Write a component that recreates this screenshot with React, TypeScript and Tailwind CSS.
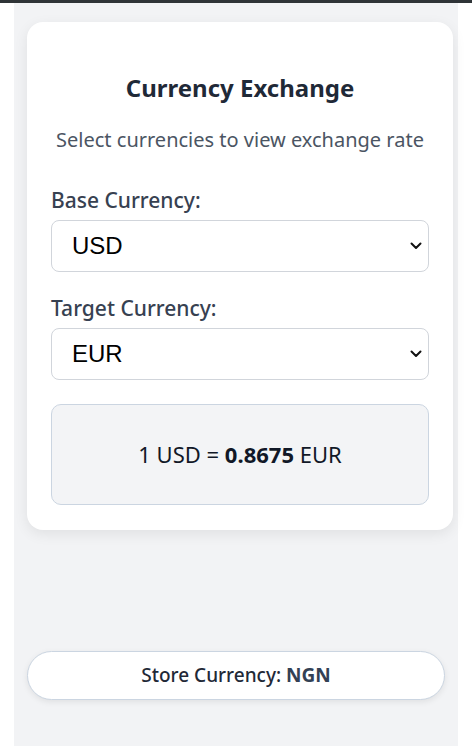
import React, { useState } from 'react';

const currencies = ['USD', 'EUR', 'GBP', 'NGN', 'JPY'];

const Chevron = () => (
    <svg className="pointer-events-none absolute right-[7px] top-1/2 -translate-y-1/2" width="12" height="8" viewBox="0 0 12 8" fill="none">
        <path d="M1.5 1.5 6 6l4.5-4.5" stroke="#111" strokeWidth="2" strokeLinecap="round" strokeLinejoin="round" />
    </svg>
);

const CurrencySelect = ({ value, onChange }: { value: string; onChange: (v: string) => void }) => (
    <div className="relative mt-[6px]">
        <select
            value={value}
            onChange={(e) => onChange(e.target.value)}
            className="block h-[52px] w-full appearance-none rounded-lg border border-[#d1d5db] bg-white pl-[20px] pr-8 font-['Liberation_Sans',sans-serif] text-[24px] text-black"
        >
            {currencies.map((c) => <option key={c}>{c}</option>)}
        </select>
        <Chevron />
    </div>
);

export default function App() {
    const [base, setBase] = useState('USD');
    const [target, setTarget] = useState('EUR');

    return (
        <div className="min-h-screen bg-white font-['Noto_Sans',sans-serif]">
            <div className="h-[3px] bg-[#2f3437]"></div>
            <div className="ml-[14px] w-[444px] min-h-[743px] bg-[#f2f3f5] pt-[19px] pl-[13px]">
                <div className="w-[426px] rounded-2xl bg-white px-6 pt-[50px] pb-[25px] shadow-[0_4px_14px_rgba(0,0,0,0.08)]">
                    <h2 className="text-center text-[24px] leading-[32px] font-bold text-[#1f2937]">Currency Exchange</h2>
                    <p className="mt-[22px] text-center text-[20px] leading-[28px] text-[#4b5563]">Select currencies to view exchange rate</p>

                    <label className="mt-[32px] block text-[21px] leading-[28px] font-medium text-[#374151]">Base Currency:</label>
                    <CurrencySelect value={base} onChange={setBase} />

                    <label className="mt-[22px] block text-[21px] leading-[28px] font-medium text-[#374151]">Target Currency:</label>
                    <CurrencySelect value={target} onChange={setTarget} />

                    <div className="mt-6 flex h-[101px] items-center justify-center rounded-[10px] border border-[#cbd5e1] bg-[#f3f4f6] text-[22px] text-[#111827]">
                        <span>1 {base} = <strong className="font-bold">0.8675</strong> {target}</span>
                    </div>
                </div>

                <div className="mt-[121px] flex h-[49px] w-[418px] items-center justify-center rounded-full border border-[#cbd5e1] bg-white text-[19px] font-medium text-[#1f2937] shadow-[0_2px_6px_rgba(0,0,0,0.08)]">
                    Store Currency:&nbsp;<span className="font-bold text-[#334155]">NGN</span>
                </div>
            </div>
        </div>
    );
}
